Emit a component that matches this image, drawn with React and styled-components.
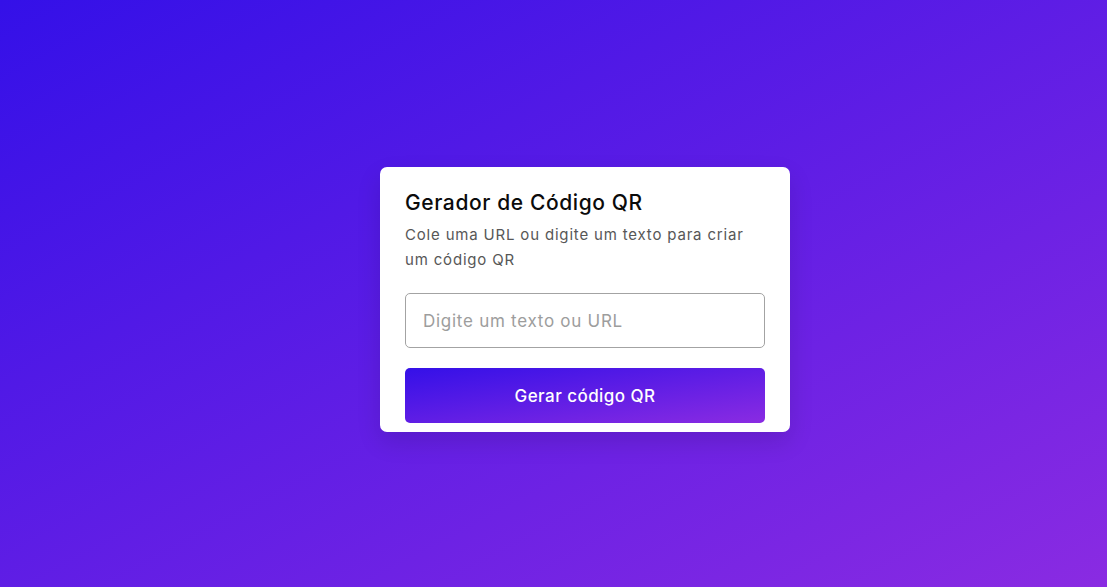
import React from "react";
import styled, { createGlobalStyle } from "styled-components";

const Global = createGlobalStyle`
  * { box-sizing: border-box; }
  html, body { margin: 0; padding: 0; height: 100%; }
  body {
    font-family: Inter, "Open Sans", sans-serif;
    background: linear-gradient(to bottom right, #3410e8 0%, #8a2be2 100%);
    min-height: 587px;
  }
`;

const Page = styled.main`
  width: 1107px;
  height: 587px;
  display: flex;
  align-items: flex-start;
  justify-content: flex-start;
  padding: 167px 0 0 380px;
`;

const Card = styled.section`
  width: 410px;
  background: #fff;
  border-radius: 7px;
  padding: 22px 25px 9px;
  box-shadow: 0 10px 25px rgba(0, 0, 0, 0.12);
  display: flex;
  flex-direction: column;
`;

const Title = styled.h1`
  margin: 0;
  font-size: 21px;
  line-height: 28px;
  font-weight: 500;
  color: #0b0b0b;
  letter-spacing: 0.6px;
`;

const Subtitle = styled.p`
  margin: 5px 0 0;
  font-size: 15px;
  line-height: 25px;
  color: #575757;
  letter-spacing: 0.82px;
`;

const Input = styled.input`
  margin-top: 21px;
  width: 100%;
  height: 55px;
  border: 1px solid #a3a3a3;
  border-radius: 5px;
  padding: 0 17px;
  font-family: inherit;
  font-size: 17px;
  letter-spacing: 0.73px;
  color: #333;
  outline: none;
  &::placeholder { color: #9d9d9d; }
`;

const Button = styled.button`
  margin-top: 20px;
  width: 100%;
  height: 55px;
  border: none;
  border-radius: 5px;
  background: linear-gradient(to bottom right, #3410e8 0%, #8a2be2 100%);
  color: #fff;
  font-family: inherit;
  font-size: 17px;
  font-weight: 500;
  letter-spacing: 0.45px;
  cursor: pointer;
`;

export default function App() {
  return (
    <>
      <Global />
      <Page>
        <Card>
          <Title>Gerador de Código QR</Title>
          <Subtitle>Cole uma URL ou digite um texto para criar um código QR</Subtitle>
          <Input type="text" placeholder="Digite um texto ou URL" />
          <Button type="button">Gerar código QR</Button>
        </Card>
      </Page>
    </>
  );
}
